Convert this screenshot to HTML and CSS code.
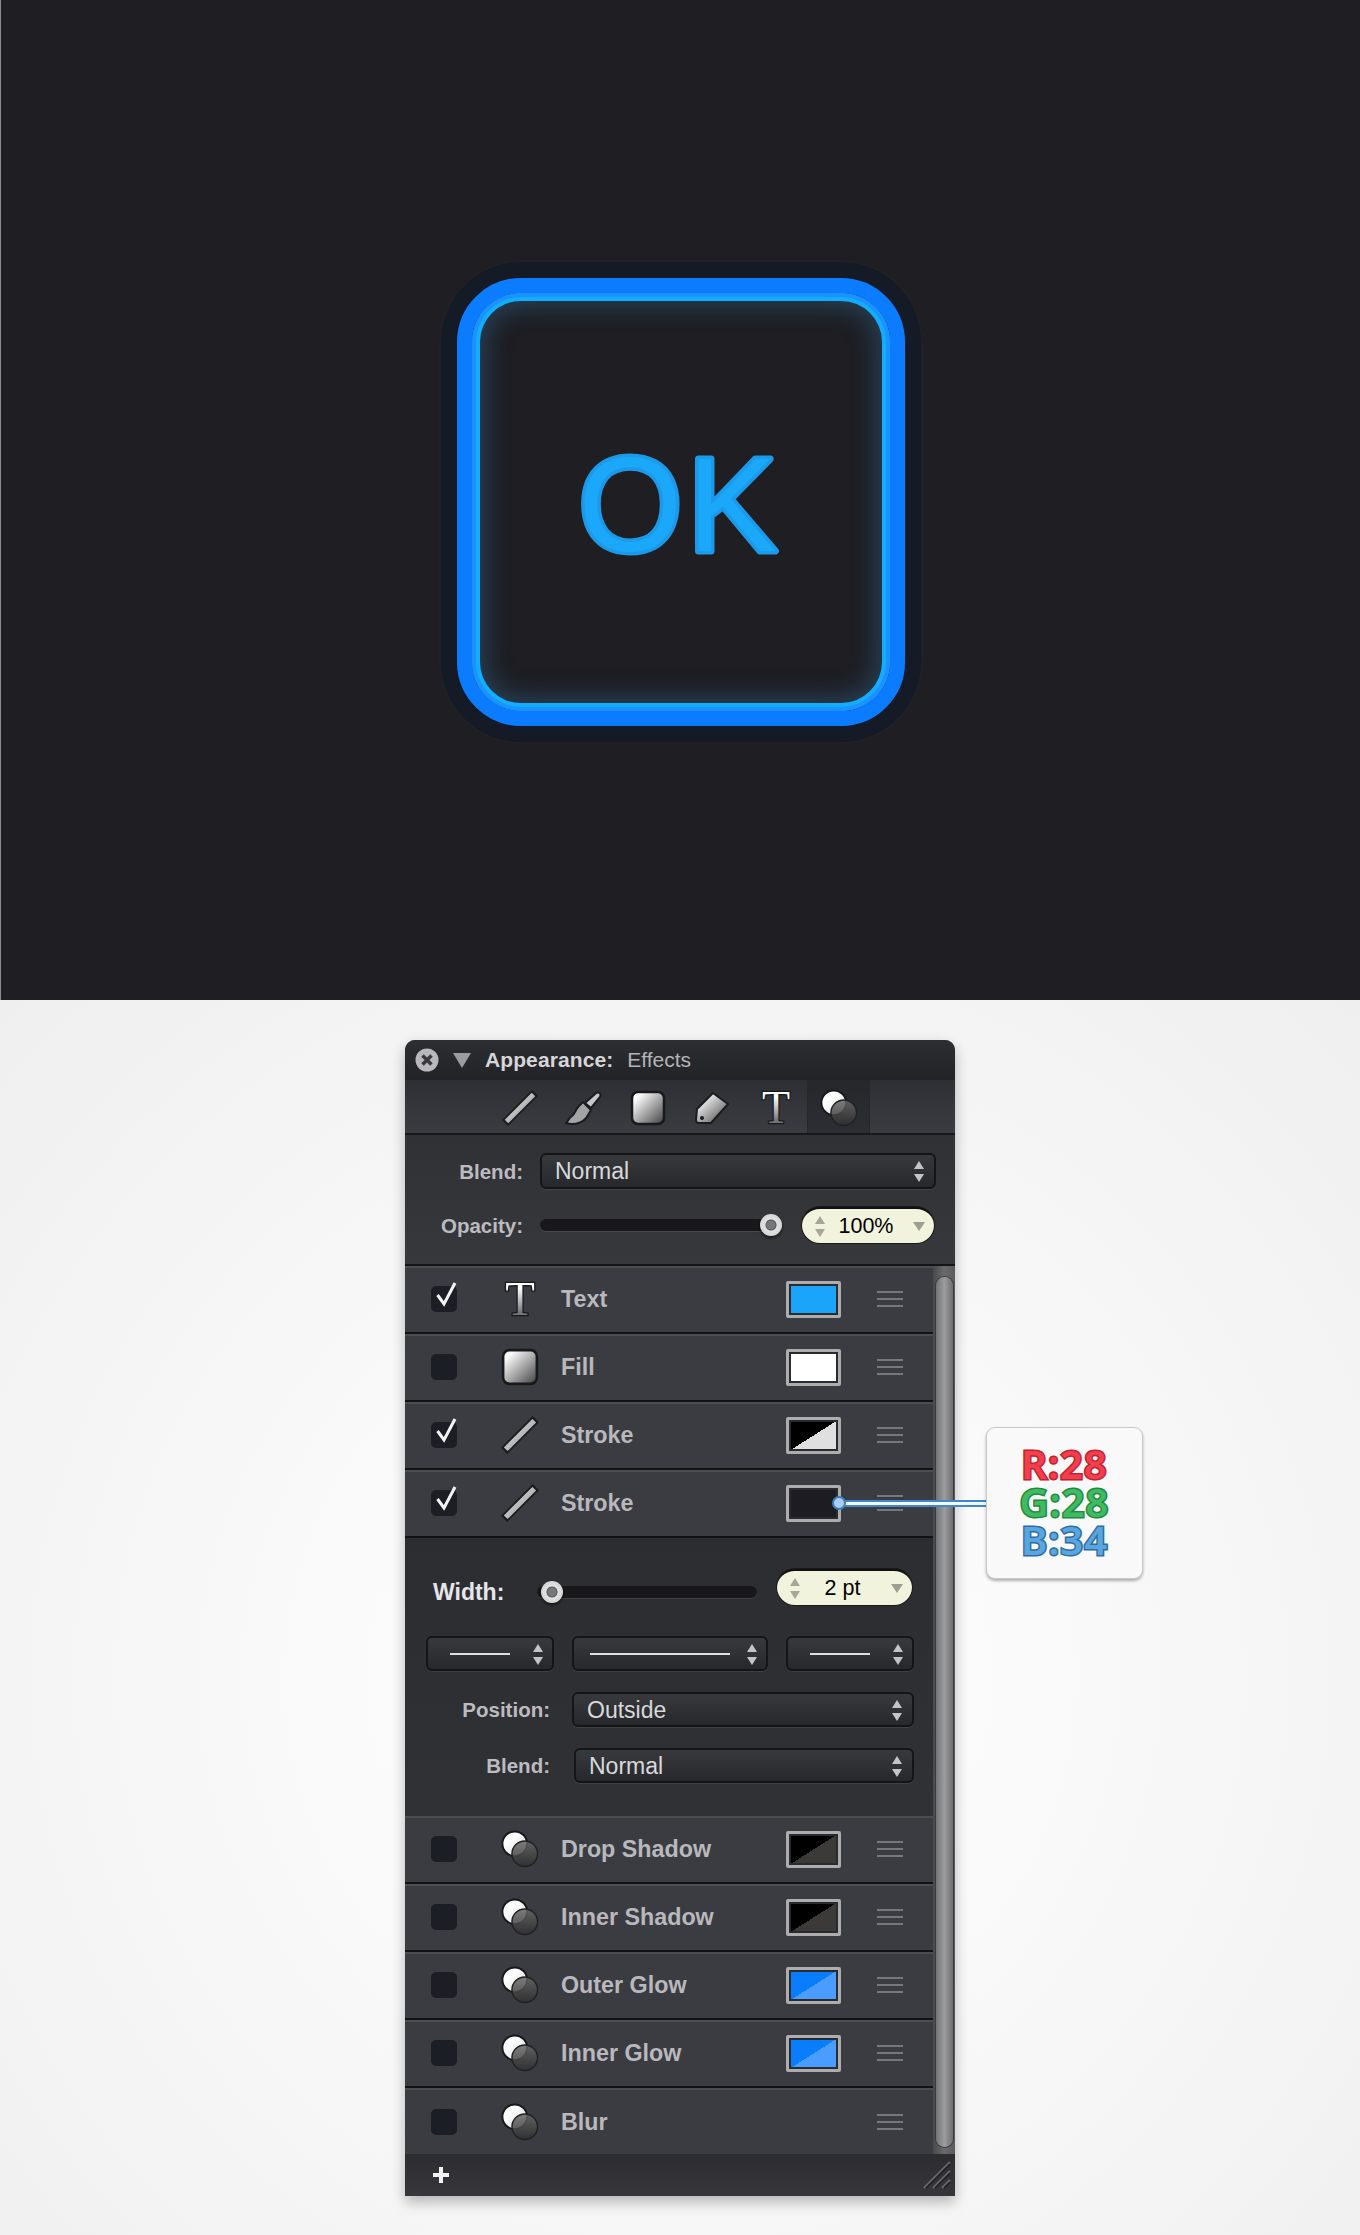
FILE: index.html
```html
<!DOCTYPE html>
<html lang="en">
<head>
    <meta charset="UTF-8">
    <meta name="viewport" content="width=device-width, initial-scale=1.0">
    <title>Appearance: Effects</title>
    <link rel="stylesheet" href="styles.css">
</head>
<body>
    <svg class="defs" width="0" height="0">
        <defs>
            <linearGradient id="gradBar" x1="0" y1="0" x2="1" y2="1">
                <stop offset="0" stop-color="#e8e8e8"/>
                <stop offset="1" stop-color="#8e8e8e"/>
            </linearGradient>
            <linearGradient id="gradFill" x1="0" y1="0" x2="1" y2="1">
                <stop offset="0.15" stop-color="#ffffff"/>
                <stop offset="1" stop-color="#3f3f3f"/>
            </linearGradient>
            <linearGradient id="gradT" x1="0" y1="0" x2="0" y2="1">
                <stop offset="0.3" stop-color="#ffffff"/>
                <stop offset="0.75" stop-color="#767676"/>
            </linearGradient>
            <linearGradient id="gradWhite" x1="0" y1="0" x2="1" y2="1">
                <stop offset="0.3" stop-color="#ffffff"/>
                <stop offset="1" stop-color="#d8d8d8"/>
            </linearGradient>
            <linearGradient id="gradDark" x1="0" y1="0" x2="0" y2="1">
                <stop offset="0" stop-color="#686868"/>
                <stop offset="1" stop-color="#2e2e2e"/>
            </linearGradient>
            <symbol id="icoLine" viewBox="0 0 36 36">
                <path d="M3 33 L33 3" stroke="#1b1c20" stroke-width="8.500"/>
                <path d="M4.500 31.500 L31.500 4.500" stroke="url(#gradBar)" stroke-width="5"/>
            </symbol>
            <symbol id="icoFill" viewBox="0 0 36 36">
                <rect x="2" y="2" width="32" height="32" rx="6" fill="url(#gradFill)" stroke="#18191c" stroke-width="2.500"/>
            </symbol>
            <symbol id="icoT" viewBox="0 0 36 36">
                <text class="ico-t" x="18" y="33" text-anchor="middle">T</text>
            </symbol>
            <symbol id="icoCircles" viewBox="0 0 40 40">
                <circle cx="14.500" cy="14.500" r="13" fill="url(#gradWhite)" stroke="#17181b" stroke-width="2"/>
                <circle cx="25" cy="25" r="13.500" fill="url(#gradDark)" fill-opacity="0.85" stroke="#212124" stroke-width="1.500"/>
            </symbol>
        </defs>
    </svg>

    <div class="hero">
        <div class="ok-button">
            <svg class="ok-svg" width="260" height="170" viewBox="0 0 260 170">
                <text class="ok-text" x="129" y="134" text-anchor="middle">OK</text>
            </svg>
        </div>
    </div>

    <div class="lower">
        <div class="panel">
            <div class="panel-head">
                <svg class="close" width="24" height="24" viewBox="0 0 24 24">
                    <circle cx="12" cy="12" r="11.500" fill="#b9b9bb"/>
                    <path d="M7.500 7.500 L16.500 16.500 M16.500 7.500 L7.500 16.500" stroke="#3a3a3d" stroke-width="3.500"/>
                </svg>
                <span class="disclosure"></span>
                <b class="head-title">Appearance:</b>
                <span class="head-sub">Effects</span>
            </div>

            <div class="toolbar">
                <div class="tool"><svg width="36" height="36"><use href="#icoLine"/></svg></div>
                <div class="tool">
                    <svg width="38" height="36" viewBox="0 0 38 36">
                        <path d="M1 33 C10 36 20 32 23 25 L26 20 L18 12 L14 16 C10 20 10 24 7 26 C4 28 3 31 1 33 Z" fill="#a4a4a4" stroke="#1b1c20" stroke-width="2" stroke-linejoin="round"/>
                        <path d="M20 13 L30 4 C33 1 37 3 35 7 L26 18 Z" fill="#c8c8c8" stroke="#1b1c20" stroke-width="2" stroke-linejoin="round"/>
                    </svg>
                </div>
                <div class="tool"><svg width="36" height="36"><use href="#icoFill"/></svg></div>
                <div class="tool">
                    <svg width="36" height="36" viewBox="0 0 36 36">
                        <path d="M19 3 L34 14 L17 33 L5 33 C3 33 2 32 2 30 L3 19 Z" fill="url(#gradFill)" stroke="#1b1c20" stroke-width="2" stroke-linejoin="round"/>
                        <circle cx="8" cy="28" r="2" fill="#1b1c20"/>
                    </svg>
                </div>
                <div class="tool"><svg width="36" height="36"><use href="#icoT"/></svg></div>
                <div class="tool tool-on"><svg width="38" height="38"><use href="#icoCircles"/></svg></div>
            </div>

            <div class="top-section">
                <div class="field">
                    <label class="field-label">Blend:</label>
                    <div class="select select-tall"><span>Normal</span><i class="updown"></i></div>
                </div>
                <div class="field">
                    <label class="field-label">Opacity:</label>
                    <div class="slider slider-opacity"><i class="thumb thumb-end"></i></div>
                    <div class="pill pill-opacity"><i class="updown updown-grey"></i><span>100%</span><i class="caret"></i></div>
                </div>
            </div>

            <div class="panel-body">
                <div class="list">
                    <div class="row">
                        <span class="check"><svg class="tick" width="26" height="26"><path d="M6.500 9 L13 18 L24 -3" /></svg></span>
                        <svg class="row-ico" width="38" height="38"><use href="#icoT"/></svg>
                        <span class="row-label">Text</span>
                        <span class="swatch sw-cyan"></span>
                        <span class="grip"></span>
                    </div>
                    <div class="row">
                        <span class="check"></span>
                        <svg class="row-ico" width="38" height="38"><use href="#icoFill"/></svg>
                        <span class="row-label">Fill</span>
                        <span class="swatch sw-white"></span>
                        <span class="grip"></span>
                    </div>
                    <div class="row">
                        <span class="check"><svg class="tick" width="26" height="26"><path d="M6.500 9 L13 18 L24 -3" /></svg></span>
                        <svg class="row-ico" width="38" height="38"><use href="#icoLine"/></svg>
                        <span class="row-label">Stroke</span>
                        <span class="swatch sw-split"></span>
                        <span class="grip"></span>
                    </div>
                    <div class="row row-open">
                        <span class="check"><svg class="tick" width="26" height="26"><path d="M6.500 9 L13 18 L24 -3" /></svg></span>
                        <svg class="row-ico" width="38" height="38"><use href="#icoLine"/></svg>
                        <span class="row-label">Stroke</span>
                        <span class="swatch sw-dark"></span>
                        <span class="grip"></span>
                    </div>

                    <div class="stroke-opts">
                        <div class="width-row">
                            <label class="width-label">Width:</label>
                            <div class="slider slider-width"><i class="thumb thumb-start"></i></div>
                            <div class="pill pill-width"><i class="updown updown-grey"></i><span>2 pt</span><i class="caret"></i></div>
                        </div>
                        <div class="line-row">
                            <div class="select select-line line-a"><span class="line"></span><i class="updown"></i></div>
                            <div class="select select-line line-b"><span class="line"></span><i class="updown"></i></div>
                            <div class="select select-line line-c"><span class="line"></span><i class="updown"></i></div>
                        </div>
                        <div class="opt-row">
                            <label class="opt-label">Position:</label>
                            <div class="select"><span>Outside</span><i class="updown"></i></div>
                        </div>
                        <div class="opt-row opt-row-wide">
                            <label class="opt-label">Blend:</label>
                            <div class="select"><span>Normal</span><i class="updown"></i></div>
                        </div>
                    </div>

                    <div class="row">
                        <span class="check"></span>
                        <svg class="row-ico" width="38" height="38"><use href="#icoCircles"/></svg>
                        <span class="row-label">Drop Shadow</span>
                        <span class="swatch sw-shadow"></span>
                        <span class="grip"></span>
                    </div>
                    <div class="row">
                        <span class="check"></span>
                        <svg class="row-ico" width="38" height="38"><use href="#icoCircles"/></svg>
                        <span class="row-label">Inner Shadow</span>
                        <span class="swatch sw-shadow"></span>
                        <span class="grip"></span>
                    </div>
                    <div class="row">
                        <span class="check"></span>
                        <svg class="row-ico" width="38" height="38"><use href="#icoCircles"/></svg>
                        <span class="row-label">Outer Glow</span>
                        <span class="swatch sw-glow"></span>
                        <span class="grip"></span>
                    </div>
                    <div class="row">
                        <span class="check"></span>
                        <svg class="row-ico" width="38" height="38"><use href="#icoCircles"/></svg>
                        <span class="row-label">Inner Glow</span>
                        <span class="swatch sw-glow"></span>
                        <span class="grip"></span>
                    </div>
                    <div class="row row-last">
                        <span class="check"></span>
                        <svg class="row-ico" width="38" height="38"><use href="#icoCircles"/></svg>
                        <span class="row-label">Blur</span>
                        <span class="swatch-none"></span>
                        <span class="grip"></span>
                    </div>
                </div>
                <div class="scrollbar"><div class="scroll-thumb"></div></div>
            </div>

            <div class="panel-foot">
                <span class="plus"></span>
                <svg width="28" height="28" viewBox="0 0 28 28">
                    <path d="M1 27 L27 1 M10 27 L27 10 M19 27 L27 19" stroke="#6a6a6e" stroke-width="2"/>
                    <path d="M3 27 L27 3 M12 27 L27 12 M21 27 L27 21" stroke="#1d1d20" stroke-width="1.500"/>
                </svg>
            </div>

            <div class="connector"><i class="connector-dot"></i></div>
            <div class="callout">
                <span class="c-r">R:28</span>
                <span class="c-g">G:28</span>
                <span class="c-b">B:34</span>
            </div>
        </div>
    </div>
</body>
</html>
```

FILE: styles.css
```css
* {
    box-sizing: border-box;
}
html, body {
    margin: 0;
    padding: 0;
}
body {
    font-family: "Liberation Sans", Arial, sans-serif;
    background-color: #f4f4f4;
}
.defs {
    display: block;
}
.hero {
    height: 1000px;
    background-color: #1e1e23;
    border-left: 1px solid #8c8c8e;
    display: flex;
    justify-content: center;
    align-items: center;
    padding-top: 4px;
}
.ok-button {
    width: 448px;
    height: 448px;
    border: 15px solid #0b7cff;
    border-radius: 64px;
    display: flex;
    justify-content: center;
    align-items: center;
    box-shadow: 0 0 0 16px #141b26, 0 0 0 18px #202026,
        inset 0 0 0 4px #1b92ff, inset 0 0 0 8px #12adff,
        inset 0 0 24px 14px rgba(48, 100, 140, 0.48);
}
.ok-svg {
    flex: none;
}
.ok-text {
    font-family: "Liberation Sans", Arial, sans-serif;
    font-size: 134px;
    letter-spacing: 5px;
    fill: #1ba8fb;
    stroke: #1c9aea;
    stroke-width: 7px;
    stroke-linejoin: round;
    paint-order: stroke;
}
.ico-t {
    font-family: "Liberation Serif", serif;
    font-size: 46px;
    fill: url(#gradT);
    stroke: #18191c;
    stroke-width: 2.500px;
    paint-order: stroke;
}

.lower {
    height: 1235px;
    padding-top: 40px;
    background: radial-gradient(ellipse at 50% 55%, #fbfbfb 30%, #efefef 100%);
}
.panel {
    position: relative;
    width: 550px;
    height: 1156px;
    margin: 0 auto;
    border-radius: 10px 10px 0 0;
    background-color: #2e2f33;
    box-shadow: 0 6px 14px rgba(0, 0, 0, 0.28);
}
.panel-head {
    height: 40px;
    display: flex;
    align-items: center;
    padding-left: 10px;
    border-radius: 10px 10px 0 0;
    background: linear-gradient(#2d2e31, #222327);
}
.close {
    margin-right: 14px;
}
.disclosure {
    width: 0;
    height: 0;
    border-left: 9px solid transparent;
    border-right: 9px solid transparent;
    border-top: 15px solid #9c9c9e;
    margin-right: 14px;
}
.head-title {
    font-size: 21px;
    letter-spacing: 0.1px;
    color: #d6d6d8;
    margin-right: 14px;
}
.head-sub {
    font-size: 21px;
    color: #b4b4b7;
}
.toolbar {
    height: 55px;
    display: flex;
    padding-left: 83px;
    background: linear-gradient(#2e2f34, #3b3c42);
    border-bottom: 2px solid #17181a;
}
.tool {
    width: 64px;
    display: flex;
    justify-content: center;
    align-items: center;
    padding-top: 2px;
}
.tool-on {
    width: 61px;
    background: linear-gradient(#26272b, #2d2e33);
    box-shadow: -1px 0 0 #26272a, 1px 0 0 #26272a;
}
.top-section {
    height: 131px;
    padding: 18px 19px 0 0;
    display: flex;
    flex-direction: column;
    gap: 18px;
    background: linear-gradient(#303135, #37383c);
    border-bottom: 2px solid #141517;
}
.field {
    display: flex;
    align-items: center;
    height: 36px;
}
.field-label {
    width: 118px;
    margin-right: 17px;
    flex: none;
    text-align: right;
    font-size: 20.500px;
    font-weight: bold;
    color: #bcbcc0;
    padding-top: 2px;
}
.select {
    flex: 1;
    height: 35px;
    display: flex;
    justify-content: space-between;
    align-items: center;
    padding: 1px 10px 0 13px;
    border: 2px solid #141517;
    border-radius: 6px;
    font-size: 23px;
    color: #d9d9db;
    background: linear-gradient(#38393d, #27282c);
    box-shadow: 0 1px 0 rgba(255, 255, 255, 0.08);
}
.select-tall {
    height: 36px;
}
.updown {
    display: flex;
    flex-direction: column;
    gap: 5px;
    flex: none;
}
.updown::before, .updown::after {
    content: "";
    display: block;
    border-left: 5px solid transparent;
    border-right: 5px solid transparent;
}
.updown::before {
    border-bottom: 8px solid #c4c4c6;
}
.updown::after {
    border-top: 8px solid #c4c4c6;
}
.updown-grey::before {
    border-bottom-color: #a6a79c;
}
.updown-grey::after {
    border-top-color: #a6a79c;
}
.slider {
    position: relative;
    height: 12px;
    flex: none;
    border-radius: 6px;
    background-color: #18181a;
    box-shadow: 0 1px 0 rgba(255, 255, 255, 0.1);
}
.slider-opacity {
    width: 232px;
    margin-right: 30px;
}
.slider-width {
    width: 220px;
    margin: 10px 20px 0 0;
}
.thumb {
    position: absolute;
    top: -5px;
    width: 22px;
    height: 22px;
    border-radius: 50%;
    background: radial-gradient(circle, #77787a 0 4px, #55565a 5px, #e2e2e2 6px, #c8c8c8 100%);
    box-shadow: 0 2px 3px rgba(0, 0, 0, 0.6);
}
.thumb-end {
    right: -10px;
}
.thumb-start {
    left: 4px;
}
.pill {
    height: 36px;
    flex: none;
    display: flex;
    align-items: center;
    justify-content: space-between;
    padding: 0 9px 0 13px;
    border-radius: 18px;
    font-size: 21.500px;
    color: #000000;
    background-color: #f1f3dc;
    border-top: 2px solid #101012;
    box-shadow: 0 0 0 1px #1a1a1c;
}
.pill span {
    margin-right: 6px;
}
.pill-opacity {
    width: 132px;
}
.pill-width {
    width: 135px;
}
.caret {
    width: 0;
    height: 0;
    border-left: 6px solid transparent;
    border-right: 6px solid transparent;
    border-top: 9px solid #9d9e92;
}

.panel-body {
    display: flex;
}
.list {
    width: 528px;
}
.row {
    height: 68px;
    display: flex;
    align-items: center;
    padding: 0 30px 2px 26px;
    background-color: #3b3c41;
    border-top: 2px solid #4c4d51;
    border-bottom: 2px solid #111214;
}
.row-last {
    height: 66px;
    border-bottom: 0;
    padding-bottom: 0;
}
.check {
    width: 26px;
    height: 26px;
    flex: none;
    border-radius: 5px;
    background-color: #1c1e25;
}
.tick {
    display: block;
    overflow: visible;
}
.tick path {
    fill: none;
    stroke: #f4f4f4;
    stroke-width: 3px;
}
.row-ico {
    flex: none;
    margin: 0 22px 0 44px;
}
.row-label {
    flex: 1;
    font-size: 23.300px;
    font-weight: bold;
    color: #b8b8bd;
}
.swatch {
    width: 55px;
    height: 37px;
    flex: none;
    border: 3px solid #adadad;
    border-radius: 2px;
    box-shadow: inset 0 0 0 2px #2a2b2e;
}
.swatch-none {
    width: 55px;
    flex: none;
}
.sw-cyan {
    background-color: #1ba5fa;
}
.sw-white {
    background-color: #ffffff;
}
.sw-dark {
    background-color: #1c1c22;
}
.sw-split {
    background: linear-gradient(to bottom right, #000000 50%, #e0e0e0 50%);
}
.sw-shadow {
    background: linear-gradient(to bottom right, #000000 50%, #3b3a38 50%);
}
.sw-glow {
    background: linear-gradient(to bottom right, #0a7dff 50%, #4a9dff 50%);
}
.grip {
    width: 26px;
    height: 16px;
    flex: none;
    margin-left: 36px;
    background: repeating-linear-gradient(#77787c 0 2px, transparent 2px 7px);
}
.stroke-opts {
    height: 278px;
    padding: 31px 19px 0 0;
    background: linear-gradient(#2c2d31, #303135);
}
.width-row {
    display: flex;
    align-items: center;
    height: 36px;
    padding-left: 28px;
}
.width-label {
    width: 104px;
    flex: none;
    margin-top: 10px;
    font-size: 23px;
    font-weight: bold;
    color: #e6e6ea;
}
.line-row {
    display: flex;
    gap: 18px;
    margin: 31px 0 21px 21px;
}
.select-line {
    flex: none;
    padding-right: 9px;
}
.line-a {
    width: 128px;
    padding-left: 22px;
}
.line-b {
    width: 196px;
    padding-left: 16px;
}
.line-c {
    width: 128px;
    padding-left: 22px;
}
.line {
    height: 2px;
    background-color: #dedede;
}
.line-a .line, .line-c .line {
    width: 60px;
}
.line-b .line {
    width: 140px;
}
.opt-row {
    display: flex;
    align-items: center;
    margin-bottom: 21px;
}
.opt-label {
    width: 145px;
    margin-right: 22px;
    flex: none;
    text-align: right;
    font-size: 20.500px;
    font-weight: bold;
    color: #bcbcc0;
}
.opt-row-wide .opt-label {
    margin-right: 24px;
}
.scrollbar {
    flex: 1;
    padding: 11px 2px 7px 3px;
    background: linear-gradient(90deg, #48494c, #6a6a6c 50%, #5a5a5c);
}
.scroll-thumb {
    height: 100%;
    border-radius: 9px;
    background: linear-gradient(90deg, #747476, #9c9c9e 50%, #6e6e70);
    box-shadow: 0 0 0 1px #3a3a3c;
}
.panel-foot {
    height: 42px;
    display: flex;
    justify-content: space-between;
    align-items: center;
    padding: 0 4px 0 28px;
    background: linear-gradient(#2d2d31, #37373b);
}
.plus {
    width: 16px;
    height: 16px;
    background: linear-gradient(#f2f2f2, #f2f2f2) center / 100% 4px no-repeat,
        linear-gradient(#f2f2f2, #f2f2f2) center / 4px 100% no-repeat;
}

/* lies over the stroke row and runs out to the callout */
.connector {
    position: absolute;
    left: 434px;
    top: 460px;
    width: 147px;
    height: 7px;
    background-color: #f2f7fc;
    border-top: 2px solid #3f87c9;
    border-bottom: 2px solid #3f87c9;
}
.connector-dot {
    position: absolute;
    left: -7px;
    top: -6px;
    width: 14px;
    height: 14px;
    border-radius: 50%;
    background-color: #a9cdf6;
    border: 2px solid #3b7dbd;
}
.callout {
    position: absolute;
    left: 581px;
    top: 387px;
    width: 157px;
    height: 152px;
    display: flex;
    flex-direction: column;
    align-items: center;
    justify-content: center;
    padding-bottom: 2px;
    border-radius: 9px;
    border: 1px solid #c9c9c9;
    background-color: #f9f9f9;
    box-shadow: 0 2px 3px rgba(0, 0, 0, 0.3);
    font-family: "Noto Sans", sans-serif;
    font-size: 40px;
    font-weight: 600;
    line-height: 38px;
    letter-spacing: 1px;
}
.callout span {
    -webkit-text-stroke-width: 3px;
    paint-order: stroke fill;
}
.c-r {
    color: #f23f4e;
    -webkit-text-stroke-color: #c4202e;
}
.c-g {
    color: #3fba62;
    -webkit-text-stroke-color: #1f8a40;
}
.c-b {
    color: #5ba5de;
    -webkit-text-stroke-color: #2c6da6;
}
```
